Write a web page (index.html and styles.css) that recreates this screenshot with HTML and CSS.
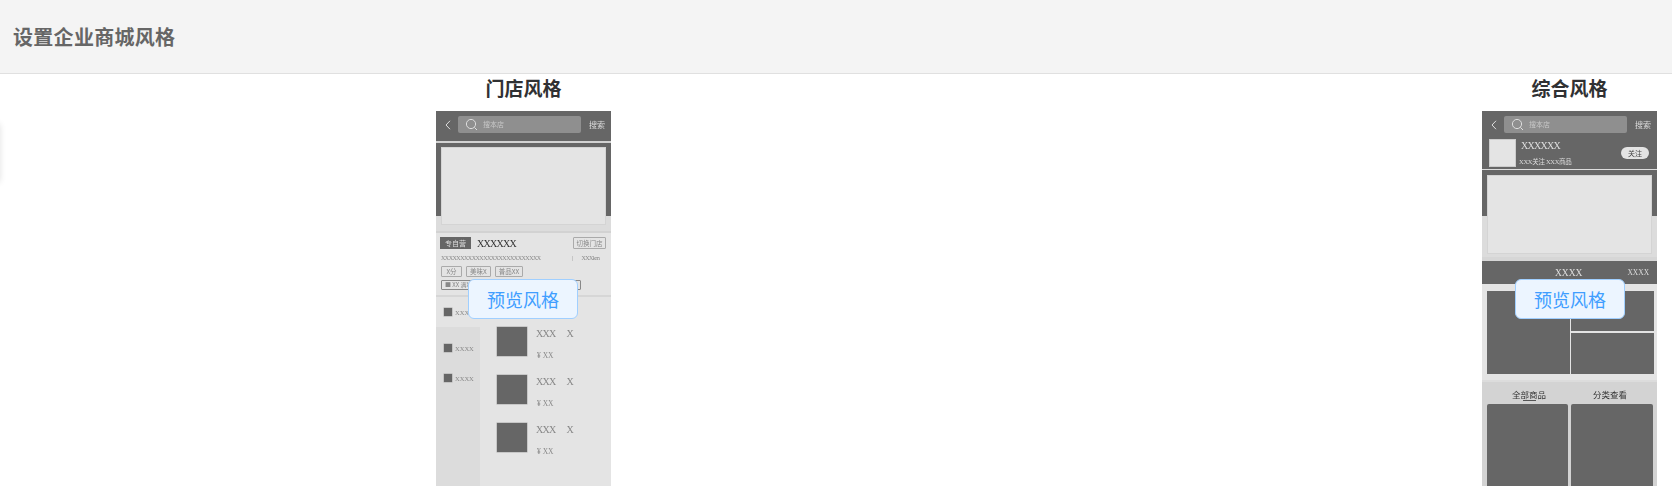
FILE: index.html
```html
<!DOCTYPE html>
<html lang="zh-CN">
<head>
  <meta charset="UTF-8" />
  <title>设置企业商城风格</title>
  <link rel="stylesheet" href="styles.css">
</head>
<body>
  <header class="page-header">
    <h1>设置企业商城风格</h1>
  </header>
  <div class="side-tab"></div>
  <main class="styles">
    <section class="style-col">
      <h2>门店风格</h2>
      <div class="phone-wrap">
        <div class="phone">
          <div class="topbar">
            <svg class="back" width="6" height="10" viewBox="0 0 6 10"><path d="M5 .8 1 5l4 4.2" /></svg>
            <div class="search">
              <svg class="lens" width="13" height="13" viewBox="0 0 13 13"><circle cx="6" cy="6" r="4.6" /><path d="M9.4 9.4 12 12" /></svg>
              <span>搜本店</span>
            </div>
            <span class="search-btn">搜索</span>
          </div>
          <div class="band"></div>
          <div class="banner"><div class="banner-img"></div></div>
          <div class="band"></div>
          <div class="store-info">
            <div class="store-row">
              <span class="badge">专自营</span>
              <span class="store-name">XXXXXX</span>
              <span class="switch">切换门店</span>
            </div>
            <div class="address">
              <span>XXXXXXXXXXXXXXXXXXXXXXXXXX</span>
              <span class="sep">|</span>
              <span class="dist">XXXkm</span>
            </div>
            <div class="chips">
              <span class="chip">X分</span>
              <span class="chip">美味X</span>
              <span class="chip">普品XX</span>
            </div>
            <div class="notice">■ XX 满XX减XX</div>
          </div>
          <div class="goods">
            <ul class="cats">
              <li class="cat cat-on"><i></i>XXXX</li>
              <li class="cat"><i></i>XXXX</li>
              <li class="cat"><i></i>XXXX</li>
            </ul>
            <div class="products">
              <div class="product">
                <div class="thumb"></div>
                <div>
                  <div class="product-name"><span>XXX</span><span>X</span></div>
                  <div class="price">¥ XX</div>
                </div>
              </div>
              <div class="product">
                <div class="thumb"></div>
                <div>
                  <div class="product-name"><span>XXX</span><span>X</span></div>
                  <div class="price">¥ XX</div>
                </div>
              </div>
              <div class="product">
                <div class="thumb"></div>
                <div>
                  <div class="product-name"><span>XXX</span><span>X</span></div>
                  <div class="price">¥ XX</div>
                </div>
              </div>
            </div>
          </div>
        </div>
        <button class="preview">预览风格</button>
      </div>
    </section>

    <section class="style-col">
      <h2>综合风格</h2>
      <div class="phone-wrap">
        <div class="phone">
          <div class="topbar topbar-short">
            <svg class="back" width="6" height="10" viewBox="0 0 6 10"><path d="M5 .8 1 5l4 4.2" /></svg>
            <div class="search">
              <svg class="lens" width="13" height="13" viewBox="0 0 13 13"><circle cx="6" cy="6" r="4.6" /><path d="M9.4 9.4 12 12" /></svg>
              <span>搜本店</span>
            </div>
            <span class="search-btn">搜索</span>
          </div>
          <div class="shop">
            <div class="shop-logo"></div>
            <div class="shop-text">
              <div class="shop-name">XXXXXX</div>
              <div class="shop-sub">XXX关注 XXX商品</div>
            </div>
            <span class="follow">关注</span>
          </div>
          <div class="band band-thin"></div>
          <div class="banner banner-tall"><div class="banner-img"></div></div>
          <div class="band band-wide"></div>
          <div class="title-bar">
            <span class="title-main">XXXX</span>
            <span class="title-more">XXXX</span>
          </div>
          <div class="mosaic">
            <div class="tile tile-big"></div>
            <div class="tile"></div>
            <div class="tile"></div>
          </div>
          <div class="tabs-block">
            <div class="tabs">
              <span class="tab tab-on">全部商品</span>
              <span class="tab">分类查看</span>
            </div>
            <div class="cards">
              <div class="card"></div>
              <div class="card"></div>
            </div>
          </div>
        </div>
        <button class="preview preview-right">预览风格</button>
      </div>
    </section>
  </main>
</body>
</html>
```

FILE: styles.css
```css
body {
  margin: 0;
  height: 493px;
  overflow: hidden;
  background: #fff;
  font-family: "Noto Sans CJK SC", "Liberation Sans", sans-serif;
}
.page-header {
  height: 73px;
  display: flex;
  align-items: center;
  padding-left: 13px;
  background: #f4f4f4;
  border-bottom: 1px solid #e0e0e0;
}
.page-header h1 {
  margin: 0;
  font-size: 20px;
  line-height: 28px;
  letter-spacing: .3px;
  color: #666;
}
.side-tab {
  position: absolute;
  left: -10px;
  top: 124px;
  width: 10px;
  height: 58px;
  box-shadow: 0 0 6px rgba(0, 0, 0, .12);
}
.styles {
  display: flex;
  gap: 871px;
  padding-left: 436px;
}
.style-col {
  width: 175px;
  flex: none;
}
.style-col h2 {
  margin: 0 0 9px;
  font-size: 19px;
  line-height: 28px;
  text-align: center;
  white-space: nowrap;
  color: #303133;
}
.phone-wrap {
  position: relative;
}
.phone {
  height: 375px;
  overflow: hidden;
  background: #e4e4e4;
  font-size: 7px;
  color: #888;
  filter: blur(.35px);
}

/* top search bar */
.topbar {
  height: 30px;
  box-sizing: border-box;
  display: flex;
  align-items: flex-start;
  padding: 5px 0 0 9px;
  background: #666;
  color: #ddd;
}
.topbar-short {
  height: 28px;
}
.back {
  margin: 4px 7px 0 0;
  flex: none;
}
.back path,
.lens circle,
.lens path {
  fill: none;
  stroke: #ddd;
  stroke-width: 1;
}
.search {
  width: 123px;
  height: 17px;
  display: flex;
  align-items: center;
  gap: 5px;
  padding-left: 7px;
  box-sizing: border-box;
  background: #8f8f8f;
  border-radius: 2px;
  line-height: 17px;
}
.search span {
  color: #c8c8c8;
}
.search-btn {
  margin-left: 8px;
  font-size: 8px;
  line-height: 17px;
}
.band {
  height: 2px;
  background: #d2d2d2;
}
.band-thin {
  height: 1px;
  background: #ddd;
}
.band-wide {
  height: 4px;
  background: #d6d6d6;
}
.banner {
  height: 88px;
  box-sizing: border-box;
  padding: 4px 5px 0;
  background: linear-gradient(#666 73px, #dcdcdc 73px);
}
.banner-tall {
  height: 87px;
  padding-top: 5px;
  background: linear-gradient(#666 46px, #dcdcdc 46px);
}
.banner-img {
  height: 78px;
  background: #e4e4e4;
  border: 1px solid #d4d4d4;
  box-sizing: border-box;
}
.banner-tall .banner-img {
  height: 79px;
}

/* store info */
.store-info {
  height: 62px;
  box-sizing: border-box;
  padding: 4px 5px 0;
  border-bottom: 2px solid #d6d6d6;
  height: 64px;
}
.store-row {
  height: 12px;
  display: flex;
  align-items: center;
}
.badge {
  width: 31px;
  height: 12px;
  margin-left: -1px;
  background: #666;
  color: #ddd;
  text-align: center;
  line-height: 12px;
}
.store-name {
  margin-left: 6px;
  font-family: "Liberation Serif", serif;
  font-size: 10px;
  letter-spacing: -.7px;
  color: #333;
}
.switch {
  margin-left: auto;
  margin-right: 0;
  width: 31px;
  height: 10px;
  border: 1px solid #aaa;
  border-radius: 1px;
  text-align: center;
  line-height: 10px;
  font-size: 6.5px;
  white-space: nowrap;
}
.address {
  height: 8px;
  margin-top: 5px;
  display: flex;
  line-height: 8px;
  font-family: "Liberation Serif", serif;
  font-size: 6px;
  letter-spacing: -.5px;
}
.sep {
  margin-left: 31px;
}
.dist {
  margin-left: 9px;
}
.chips {
  height: 11px;
  margin-top: 4px;
  display: flex;
  gap: 4px;
}
.chip {
  padding: 0 3px;
  min-width: 13px;
  border: 1px solid #aaa;
  border-radius: 1px;
  text-align: center;
  line-height: 9px;
  font-size: 6.5px;
  white-space: nowrap;
}
.notice {
  width: 140px;
  height: 10px;
  margin-top: 3px;
  box-sizing: border-box;
  padding-left: 3px;
  border: 1px solid #888;
  border-radius: 1px;
  line-height: 8px;
  font-size: 6px;
  white-space: nowrap;
}

/* goods list */
.goods {
  height: 189px;
  display: flex;
}
.cats {
  width: 44px;
  margin: 0;
  padding: 0 0 0;
  list-style: none;
  background: #dcdcdc;
  flex: none;
}
.cat {
  height: 30px;
  display: flex;
  align-items: center;
  gap: 3px;
  padding-left: 8px;
  font-family: "Liberation Serif", serif;
  font-size: 6.5px;
}
.cat-on {
  margin-bottom: 6px;
  background: #e4e4e4;
}
.cat i {
  width: 8px;
  height: 8px;
  background: #666;
  box-shadow: 0 0 0 .5px #aaa;
}
.products {
  padding: 30px 0 0 17px;
  display: flex;
  flex-direction: column;
  gap: 19px;
}
.product {
  height: 29px;
  display: flex;
  gap: 9px;
}
.thumb {
  width: 30px;
  height: 29px;
  background: #666;
  box-shadow: 0 0 0 .5px #aaa;
}
.product-name {
  width: 37px;
  display: flex;
  justify-content: space-between;
  line-height: 14px;
  font-family: "Liberation Serif", serif;
  font-size: 10px;
  letter-spacing: -.7px;
}
.price {
  margin: 10px 0 0 1px;
  line-height: 10px;
  font-family: "Liberation Serif", serif;
  font-size: 7.5px;
}

/* shop head on the second phone */
.shop {
  height: 30px;
  display: flex;
  align-items: flex-start;
  padding-left: 7px;
  background: #666;
  color: #ddd;
}
.shop-logo {
  width: 27px;
  height: 28px;
  box-sizing: border-box;
  background: #e4e4e4;
  border: 1px solid #ccc;
}
.shop-text {
  margin-left: 3px;
}
.shop-name {
  margin-left: 2px;
  line-height: 14px;
  font-family: "Liberation Serif", serif;
  font-size: 10px;
  letter-spacing: -.7px;
}
.shop-sub {
  margin-top: 4px;
  line-height: 10px;
  font-family: "Liberation Serif", "Noto Sans CJK SC", serif;
  font-size: 6.5px;
  letter-spacing: -.3px;
  white-space: nowrap;
}
.follow {
  width: 28px;
  height: 12px;
  margin: 8px 8px 0 auto;
  background: #e4e4e4;
  border-radius: 6px;
  text-align: center;
  line-height: 12px;
  color: #444;
}
.title-bar {
  height: 23px;
  display: flex;
  align-items: center;
  padding-left: 73px;
  background: #666;
  color: #ddd;
  font-family: "Liberation Serif", serif;
}
.title-main {
  font-size: 9.5px;
}
.title-more {
  margin-left: 45px;
  font-size: 7.5px;
}
.mosaic {
  height: 83px;
  padding: 7px 4px 6px 5px;
  display: grid;
  grid-template-columns: 83px 83px;
  grid-template-rows: 40px 41px;
  gap: 2px 1px;
}
.tile {
  background: #666;
}
.tile-big {
  grid-row: span 2;
}
.tabs-block {
  height: 106px;
  box-sizing: border-box;
  padding: 0 1px;
  border-top: 2px solid #dcdcdc;
  background: #d3d3d3;
}
.tabs {
  height: 22px;
  box-sizing: border-box;
  display: flex;
  gap: 47px;
  padding: 6px 0 0 29px;
}
.tab {
  width: 34px;
  line-height: 12px;
  font-size: 8.5px;
  color: #333;
  white-space: nowrap;
}
.tab-on::after {
  content: "";
  display: block;
  width: 13px;
  height: 1px;
  margin: 0 auto;
  background: #555;
}
.cards {
  display: grid;
  grid-template-columns: 81px 82px;
  gap: 3px;
  padding-left: 4px;
}
.card {
  height: 84px;
  background: #666;
  border-radius: 2px;
}

/* hover button over each phone */
.preview {
  position: absolute;
  left: 32px;
  top: 168px;
  width: 110px;
  height: 40px;
  padding: 0;
  font-family: inherit;
  font-size: 18px;
  color: #409eff;
  background: #ecf5ff;
  border: 1px solid #a0cfff;
  border-radius: 6px;
}
.preview-right {
  left: 33px;
}
```
